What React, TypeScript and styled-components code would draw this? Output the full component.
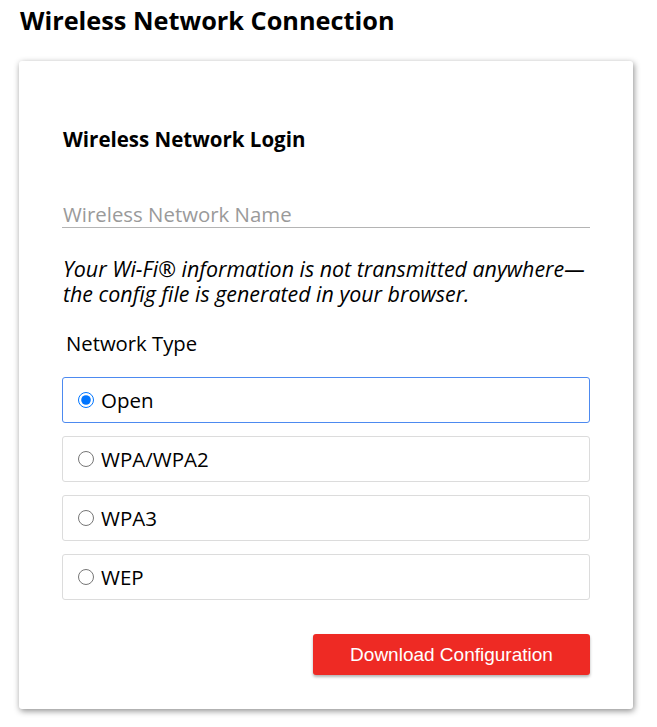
import React, { useState } from "react";
import styled, { createGlobalStyle } from "styled-components";

const Global = createGlobalStyle`
  html, body { margin: 0; padding: 0; background: #fff; }
  body { font-family: "Open Sans", "Noto Sans", sans-serif; color: #000; }
  * { box-sizing: border-box; }
`;

const Page = styled.div`
  padding: 4px 24px 16px 19px;
`;

const Title = styled.h1`
  margin: 0 0 25px 1px;
  font-size: 25.3px;
  font-weight: 700;
  line-height: 32px;
`;

const Card = styled.div`
  width: 614px;
  background: #fff;
  border-radius: 3px;
  box-shadow: 1px 2px 6px rgba(0, 0, 0, 0.45);
  padding: 64px 43px 34px 43px;
  display: flex;
  flex-direction: column;
`;

const CardTitle = styled.h2`
  margin: 0 0 0 1px;
  font-size: 20.5px;
  font-weight: 700;
  line-height: 28px;
`;

const NameInput = styled.input`
  margin-top: 45px;
  width: 100%;
  height: 30px;
  border: none;
  border-bottom: 1px solid #b4b4b4;
  font-family: inherit;
  font-size: 20.4px;
  padding: 3px 0 0 1px;
  outline: none;
  &::placeholder { color: #9a9a9a; }
`;

const Note = styled.p`
  margin: 28px 0 0 1px;
  font-style: italic;
  font-size: 21.4px;
  line-height: 25px;
  white-space: nowrap;
`;

const NoteLine = styled.span`
  display: block;
  height: 25px;
`;

const TypeLabel = styled.div`
  margin: 24px 0 0 4px;
  font-size: 20.3px;
  line-height: 26px;
`;

const Options = styled.div`
  margin-top: 21px;
  display: flex;
  flex-direction: column;
  gap: 13px;
`;

const Option = styled.label<{ $selected: boolean }>`
  height: 46px;
  display: flex;
  align-items: center;
  gap: 7px;
  padding-left: 15px;
  border: 1px solid ${(p) => (p.$selected ? "#4d8af0" : "#dcdcdc")};
  border-radius: 3px;
  font-size: 20.5px;
  cursor: pointer;
  input {
    margin: 0;
    width: 16px;
    height: 16px;
  }
`;

const Actions = styled.div`
  margin-top: 34px;
  display: flex;
  justify-content: flex-end;
`;

const Button = styled.button`
  width: 277px;
  height: 41px;
  background: #ee2a24;
  color: #fff;
  border: none;
  border-radius: 3px;
  font-family: "Liberation Sans", Arial, sans-serif;
  font-size: 19px;
  box-shadow: 0 2px 3px rgba(0, 0, 0, 0.3);
  cursor: pointer;
`;

const types = ["Open", "WPA/WPA2", "WPA3", "WEP"];

export default function App() {
  const [sel, setSel] = useState("Open");
  return (
    <Page>
      <Global />
      <Title>Wireless Network Connection</Title>
      <Card>
        <CardTitle>Wireless Network Login</CardTitle>
        <NameInput placeholder="Wireless Network Name" />
        <Note>
          <NoteLine>Your Wi-Fi® information is not transmitted anywhere—</NoteLine>
          <NoteLine>the config file is generated in your browser.</NoteLine>
        </Note>
        <TypeLabel>Network Type</TypeLabel>
        <Options>
          {types.map((t) => (
            <Option key={t} $selected={sel === t}>
              <input
                type="radio"
                name="type"
                checked={sel === t}
                onChange={() => setSel(t)}
              />
              {t}
            </Option>
          ))}
        </Options>
        <Actions>
          <Button>Download Configuration</Button>
        </Actions>
      </Card>
    </Page>
  );
}
